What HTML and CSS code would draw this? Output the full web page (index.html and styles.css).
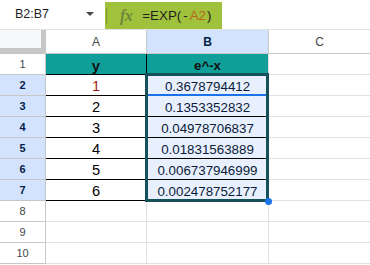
FILE: index.html
```html
<!DOCTYPE html>
<html>
<head>
<meta charset="utf-8">
<link rel="stylesheet" href="styles.css">
</head>
<body>
<div class="app">
  <div class="topbar">
    <div class="namebox">
      <span class="range">B2:B7</span>
      <span class="caret"></span>
    </div>
    <div class="formula">
      <span class="sep"></span>
      <span class="fx">fx</span>
      <span class="expr">=EXP(<span class="sp">-</span><span class="ref">A2</span>)</span>
    </div>
  </div>
  <div class="sheet">
    <div class="corner"></div>
    <div class="colh">A</div>
    <div class="colh sel">B</div>
    <div class="colh last">C</div>

    <div class="rowh">1</div>
    <div class="cell head ca">y</div>
    <div class="cell head cb">e^-x</div>
    <div class="cell cc"></div>

    <div class="rowh sel">2</div>
    <div class="cell data ca red">1</div>
    <div class="cell num cb active">0.3678794412</div>
    <div class="cell cc"></div>

    <div class="rowh sel">3</div>
    <div class="cell data ca">2</div>
    <div class="cell num cb">0.1353352832</div>
    <div class="cell cc"></div>

    <div class="rowh sel">4</div>
    <div class="cell data ca">3</div>
    <div class="cell num cb">0.04978706837</div>
    <div class="cell cc"></div>

    <div class="rowh sel">5</div>
    <div class="cell data ca">4</div>
    <div class="cell num cb">0.01831563889</div>
    <div class="cell cc"></div>

    <div class="rowh sel">6</div>
    <div class="cell data ca">5</div>
    <div class="cell num cb">0.006737946999</div>
    <div class="cell cc"></div>

    <div class="rowh sel">7</div>
    <div class="cell data ca">6</div>
    <div class="cell num cb">0.002478752177</div>
    <div class="cell cc"></div>

    <div class="rowh">8</div>
    <div class="cell"></div>
    <div class="cell"></div>
    <div class="cell cc"></div>

    <div class="rowh">9</div>
    <div class="cell"></div>
    <div class="cell"></div>
    <div class="cell cc"></div>

    <div class="rowh">10</div>
    <div class="cell"></div>
    <div class="cell"></div>
    <div class="cell cc"></div>

    <div class="selection"></div>
    <div class="handle"></div>
  </div>
</div>
</body>
</html>
```

FILE: styles.css
```css
* { box-sizing: border-box; }
html, body { margin: 0; padding: 0; background: #fff; }
body { font-family: "Liberation Sans", Arial, sans-serif; }

.app { width: 370px; height: 265px; overflow: hidden; }

.topbar {
  display: flex;
  height: 30px;
  border-bottom: 1px solid #e1e3e1;
}
.namebox {
  width: 105px;
  display: flex;
  align-items: center;
  padding-left: 15px;
  padding-bottom: 1px;
}
.range { font-size: 12.5px; color: #1f1f1f; width: 71px; }
.caret {
  width: 0; height: 0;
  border-left: 4px solid transparent;
  border-right: 4px solid transparent;
  border-top: 4px solid #444746;
}
.formula {
  width: 117px;
  margin-top: 2px;
  background: #a0c13b;
  display: flex;
  align-items: center;
}
.sep {
  width: 1px;
  height: 16px;
  background: #7f9a33;
  margin-left: 1px;
}
.fx {
  font-family: "Liberation Serif", serif;
  font-style: italic;
  font-weight: bold;
  font-size: 16px;
  color: #6f873a;
  margin-left: 13px;
  letter-spacing: -0.5px;
}
.expr {
  font-size: 13.33px;
  color: #1f1f1f;
  margin-left: 10px;
}
.sp { margin: 0 2px; }
.ref { color: #b8671a; margin-right: 1px; }

.sheet {
  position: relative;
  display: grid;
  grid-template-columns: 46px 101px 122px 101px;
  grid-template-rows: 24px repeat(10, 21px);
  font-size: 13.33px;
}
.corner {
  background: #f8f9fa;
  box-shadow: inset -4px -5px 0 #c7c7c7;
  border-right: 1px solid #c7c7c7;
  border-bottom: 1px solid #c7c7c7;
}
.colh {
  display: flex;
  align-items: center;
  justify-content: center;
  font-size: 12px;
  color: #444746;
  border-right: 1px solid #c7c7c7;
  border-bottom: 1px solid #c7c7c7;
  padding-top: 1px;
}
.colh.sel { background: #d3e3fd; color: #041e49; font-weight: bold; }
.colh.last { border-right: none; }

.rowh {
  display: flex;
  align-items: center;
  justify-content: center;
  font-size: 11px;
  color: #444746;
  border-right: 1px solid #c7c7c7;
  border-bottom: 1px solid #c7c7c7;
}
.rowh.sel { background: #d3e3fd; color: #041e49; font-weight: bold; }

.cell {
  display: flex;
  align-items: flex-end;
  justify-content: center;
  line-height: 16px;
  border-right: 1px solid #e1e1e1;
  border-bottom: 1px solid #e1e1e1;
  color: #000;
}
.cell.cc { border-right: none; }
.cell.ca { border-right-color: #000; border-bottom-color: #000; }
.cell.cb { border-bottom-color: #000; }
.cell.head { background: #109e99; font-weight: bold; color: #111; }
.cell.head.ca { font-size: 15px; }
.cell.data { font-size: 14.67px; line-height: 17px; }
.cell.red { color: #a01f12; }
.cell.num { background: #e8f0fe; color: #0b1b3a; }
.cell.active { border-bottom-color: #1a73e8; box-shadow: inset 0 -1px 0 #1a73e8; }

.selection {
  position: absolute;
  left: 145px;
  top: 43px;
  width: 124px;
  height: 129px;
  border: 3px solid #16505a;
  pointer-events: none;
}
.handle {
  position: absolute;
  left: 265px;
  top: 168px;
  width: 7px;
  height: 7px;
  border-radius: 50%;
  background: #1a73e8;
}
```
